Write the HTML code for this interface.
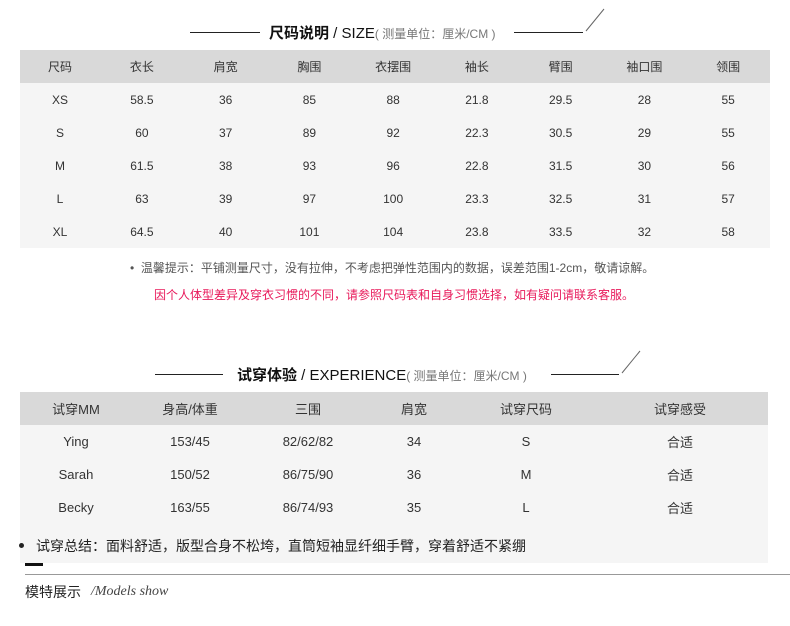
<!DOCTYPE html>
<html><head><meta charset="utf-8"><style>
*{margin:0;padding:0;box-sizing:border-box}
body{width:790px;height:626px;background:#fff;position:relative;overflow:hidden;font-family:"Liberation Sans","Noto Sans CJK SC",sans-serif;color:#333}
.a{position:absolute;white-space:nowrap}
.ln{position:absolute;height:1px;background:#222}
.t{position:absolute;font-size:15px;color:#111}
.t b{font-weight:bold}
.t small{font-size:12px;color:#777}
table{position:absolute;border-collapse:collapse;font-size:12px;color:#333;table-layout:fixed}
td{text-align:center;padding:0;height:33px}
.h td{background:#d9d9d9}
</style></head><body>
<div class="ln" style="left:190px;top:32px;width:70px"></div>
<div class="t" style="left:269px;top:22px"><b>尺码说明</b> / SIZE<small>( 测量单位：厘米/CM )</small></div>
<div class="ln" style="left:514px;top:32px;width:69px"></div>
<svg class="a" style="left:585px;top:8px" width="20" height="24"><line x1="19" y1="1" x2="1" y2="23" stroke="#666" stroke-width="1"/></svg>

<table style="left:20px;top:50px;width:750px;background:#f5f5f5">
<colgroup><col style="width:80px"><col span="8" style="width:83.75px"></colgroup>
<tr class="h"><td>尺码</td><td>衣长</td><td>肩宽</td><td>胸围</td><td>衣摆围</td><td>袖长</td><td>臂围</td><td>袖口围</td><td>领围</td></tr>
<tr><td>XS</td><td>58.5</td><td>36</td><td>85</td><td>88</td><td>21.8</td><td>29.5</td><td>28</td><td>55</td></tr>
<tr><td>S</td><td>60</td><td>37</td><td>89</td><td>92</td><td>22.3</td><td>30.5</td><td>29</td><td>55</td></tr>
<tr><td>M</td><td>61.5</td><td>38</td><td>93</td><td>96</td><td>22.8</td><td>31.5</td><td>30</td><td>56</td></tr>
<tr><td>L</td><td>63</td><td>39</td><td>97</td><td>100</td><td>23.3</td><td>32.5</td><td>31</td><td>57</td></tr>
<tr><td>XL</td><td>64.5</td><td>40</td><td>101</td><td>104</td><td>23.8</td><td>33.5</td><td>32</td><td>58</td></tr>
</table>

<div class="a" style="left:130px;top:259px;font-size:12px;color:#555">•&nbsp;&nbsp;温馨提示：平铺测量尺寸，没有拉伸，不考虑把弹性范围内的数据，误差范围1-2cm，敬请谅解。</div>
<div class="a" style="left:154px;top:286px;font-size:12px;color:#e8185a">因个人体型差异及穿衣习惯的不同，请参照尺码表和自身习惯选择，如有疑问请联系客服。</div>

<div class="ln" style="left:155px;top:374px;width:68px"></div>
<div class="t" style="left:237px;top:364px"><b>试穿体验</b> / EXPERIENCE<small>( 测量单位：厘米/CM )</small></div>
<div class="ln" style="left:551px;top:374px;width:68px"></div>
<svg class="a" style="left:621px;top:350px" width="20" height="24"><line x1="19" y1="1" x2="1" y2="23" stroke="#666" stroke-width="1"/></svg>

<div class="a" style="left:20px;top:392px;width:748px;height:171px;background:#f5f5f5"></div>
<table style="left:20px;top:392px;width:748px;font-size:13px">
<colgroup><col style="width:112px"><col style="width:116px"><col style="width:120px"><col style="width:92px"><col style="width:132px"><col style="width:176px"></colgroup>
<tr class="h"><td>试穿MM</td><td>身高/体重</td><td>三围</td><td>肩宽</td><td>试穿尺码</td><td>试穿感受</td></tr>
<tr><td>Ying</td><td>153/45</td><td>82/62/82</td><td>34</td><td>S</td><td>合适</td></tr>
<tr><td>Sarah</td><td>150/52</td><td>86/75/90</td><td>36</td><td>M</td><td>合适</td></tr>
<tr><td>Becky</td><td>163/55</td><td>86/74/93</td><td>35</td><td>L</td><td>合适</td></tr>
</table>
<div class="a" style="left:19px;top:543px;width:5px;height:5px;border-radius:50%;background:#222"></div>
<div class="a" style="left:36px;top:536px;font-size:14px;color:#222">试穿总结：面料舒适，版型合身不松垮，直筒短袖显纤细手臂，穿着舒适不紧绷</div>
<div class="a" style="left:25px;top:563px;width:18px;height:3px;background:#111"></div>
<div class="a" style="left:25px;top:574px;width:765px;height:1px;background:#999"></div>
<div class="a" style="left:25px;top:582px;font-size:14px;color:#222">模特展示</div>
<div class="a" style="left:91px;top:584px;font-size:14px;font-family:'Liberation Serif',serif;font-style:italic;color:#444">/Models show</div>
</body></html>
